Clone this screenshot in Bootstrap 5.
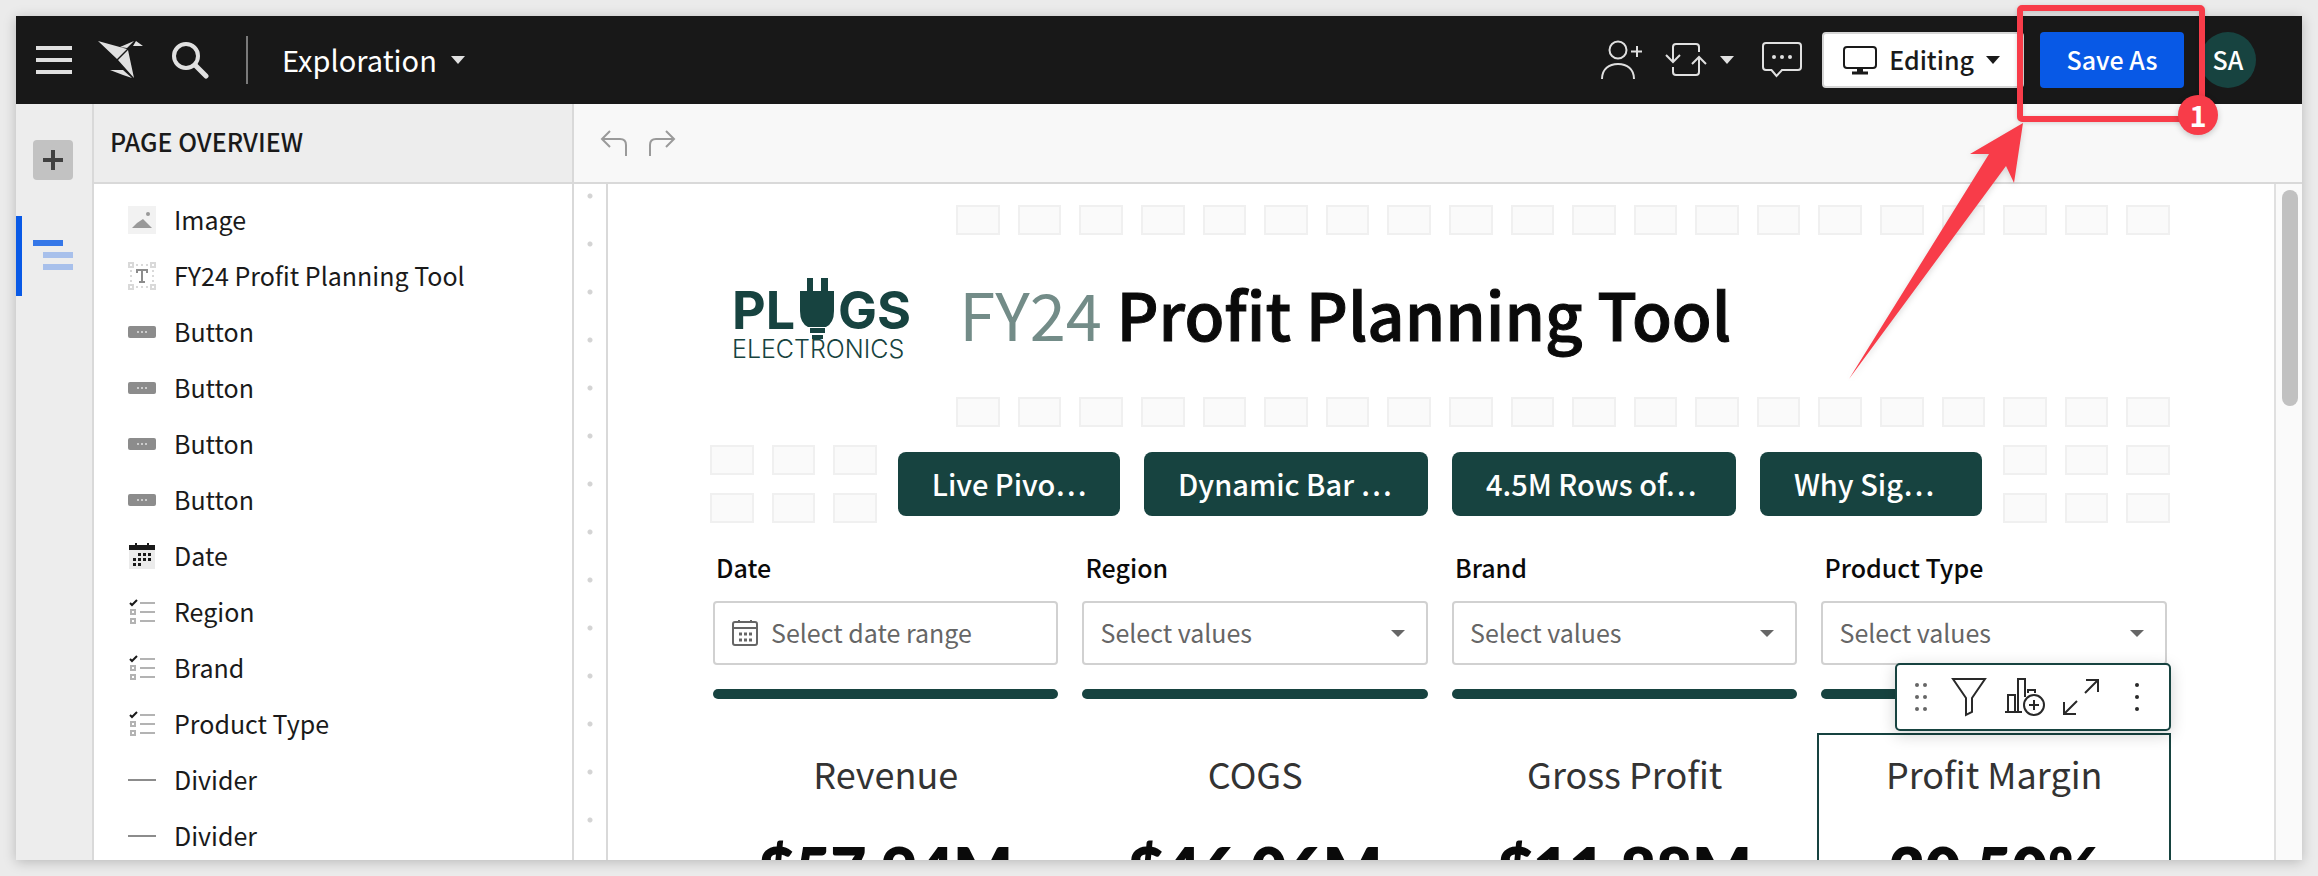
<!DOCTYPE html>
<html lang="en">
<head>
<meta charset="utf-8">
<meta name="viewport" content="width=device-width, initial-scale=1">
<title>FY24 Profit Planning Tool</title>
<link href="https://cdn.jsdelivr.net/npm/bootstrap@5.3.0/dist/css/bootstrap.min.css" rel="stylesheet">
<style>
:root{--pine:#174340;--line:#d9d9d9;--ink:#1a1a1a;--blue:#0859e6;--red:#f83c49}
body{background:#ebebeb;font-family:"Noto Sans CJK SC",sans-serif;font-size:25px;line-height:36px;color:var(--ink)}
button{font:inherit;color:inherit}
svg{display:block;flex:none}
.semi{font-weight:500}
.lift{padding-bottom:3px}
.page-frame{height:100vh;padding:16px}
.app-window{box-shadow:0 2px 12px rgba(0,0,0,.22);background:#fff}
.topbar{height:88px;background:#181818;color:#e0e0e0;padding:0 46px 0 20px;z-index:3}
.plain-btn{background:none;border:0;padding:0}
.search-btn{margin-left:28px}
.bird-link{margin-left:26px}
.refresh-btn{margin-left:22px;gap:13px}
.comment-btn{margin-left:28px}
.split{width:2px;height:48px;background:#7a7a7a;margin:0 34px 0 37px}
.doc-name{font-size:29px;color:#fff;gap:14px}
.mode-btn{height:56px;background:#fff;border:2px solid #d6d6d6;border-radius:4px;color:var(--ink);padding:0 22px 0 19px;gap:12px;margin-left:20px}
.save-wrap{margin-left:16px}
.save-btn{height:56px;width:144px;border:0;border-radius:4px;background:var(--blue);color:#fff}
.avatar{width:56px;height:56px;background:var(--pine);color:#fff;margin-left:16px}
.callout-box{inset:-27px -21px -34px -23px;border:6px solid var(--red);border-radius:5px;pointer-events:none;filter:drop-shadow(0 1px 2px rgba(0,0,0,.15));z-index:2}
.callout-num{width:40px;height:40px;right:-34px;bottom:-47px;background:var(--red);color:#fff;font-size:29px;z-index:3;box-shadow:0 2px 6px rgba(0,0,0,.2)}
.callout-arrow{right:157px;top:90px;z-index:2;pointer-events:none;filter:drop-shadow(0 2px 3px rgba(0,0,0,.15))}
.rail{width:78px;background:#ededed;border-right:2px solid var(--line)}
.add-btn{width:40px;height:40px;border:0;border-radius:4px;background:#c2c2c2;margin:36px 0 0 17px;padding:0}
.rail-tab{margin-top:36px;height:80px;border:0;border-left:6px solid var(--blue);background:none;padding:0 0 2px 11px}
.overview{width:480px;border-right:2px solid var(--line)}
.pane-head{height:80px;border-bottom:2px solid var(--line)}
.overview .pane-head{background:#ededed;padding:0 16px 4px}
.pane-head h2{font-size:25px;line-height:36px}
.edit-bar{background:#f8f8f8;padding:0 26px;gap:20px}
.outline{padding:8px 0 0 34px}
.outline a{height:56px;gap:18px;color:var(--ink);text-decoration:none}
.gutter{width:34px;border-right:2px solid var(--line);background:radial-gradient(circle at 16px 12px,#d4d4d4 2px,transparent 3px) 0 0/34px 48px repeat-y}
.track{width:28px;background:#fafafa;border-left:2px solid #e0e0e0;padding:6px 4px 0 6px}
.thumb{height:216px;background:#c1c1c1;border-radius:8px}
.sheet{padding:21px 104px 0 102px}
.cells{display:grid;grid-template-columns:repeat(24,minmax(0,1fr));grid-auto-rows:30px;gap:18px}
.slot{background:#fafafa;border:2px solid #f0f0f0}
.brand-area{grid-column:1/5;grid-row:1/6;padding:68px 0 0 23px}
.title-area{grid-column:5/25;grid-row:2/5;padding:0 0 6px 3px}
.title-area h1{font-size:65px;line-height:96px;color:#0a0a0a;-webkit-text-stroke:1px #0a0a0a}
.title-area h1 span{font-weight:400;color:#738c88;-webkit-text-stroke:0}
.nav-pill{margin:7px 3px;border:0;border-radius:8px;background:var(--pine);color:#fff;font-size:29px;padding:0 24px 3px 34px;text-align:left;white-space:nowrap}
.field-box{margin:8px 3px 0}
.field-box label{height:52px;padding-left:3px;color:#0a0a0a}
.picker{height:64px;border:2px solid #d1d1d1;border-radius:4px;background:#fff;color:#666;padding:0 21px 0 16px;gap:12px}
.rule-bar{height:10px;border-radius:5px;background:var(--pine);margin:4px 3px 0}
.kpi{border:2px solid transparent;padding-top:12px}
.kpi.active{border-color:var(--pine);margin:0 -1px}
.kpi h3{font-size:36px;line-height:52px;color:#333;font-weight:400}
.kpi strong{font-size:62px;line-height:80px;font-family:Lato,sans-serif;font-weight:800;color:#0a0a0a;margin-top:30px}
.kpi-tools{right:-2px;bottom:100%;margin-bottom:4px;width:276px;height:68px;border:2px solid var(--pine);border-radius:5px;background:#fff;box-shadow:0 4px 16px rgba(0,0,0,.18);padding:0 4px;color:#292929}
.kpi-tools button{width:56px;height:64px}
.kpi-tools .grip{width:40px}
</style>
</head>
<body>
<div class="page-frame">
<div class="app-window d-flex flex-column h-100">
  <header class="topbar d-flex align-items-center position-relative flex-shrink-0">
    <button class="plain-btn" aria-label="Menu"><svg width="36" height="28" fill="currentColor"><path d="M0 0h36v4H0zM0 12h36v4H0zM0 24h36v4H0z"/></svg></button>
    <a class="bird-link" href="#" aria-label="Home"><svg width="46" height="40" viewBox="0 0 46 40" fill="#e0e0e0"><path d="M0 1 29 9 19 19zM22 7 36 1 29 8zM38 1 45 6H35zM30 10 36 38 20 20zM12 30H25L34 38 25 35z"/></svg></a>
    <button class="plain-btn search-btn" aria-label="Search"><svg width="37" height="37" viewBox="0 0 37 37" fill="none" stroke="#e0e0e0" stroke-width="4" stroke-linecap="round"><circle cx="14" cy="14" r="12"/><path d="M23 23 34 34" stroke-width="5"/></svg></button>
    <div class="split"></div>
    <button class="plain-btn doc-name d-flex align-items-center"><span class="lift">Exploration</span><svg width="14" height="8" fill="#e0e0e0"><path d="M0 0H14L7 8z"/></svg></button>
    <button class="plain-btn ms-auto" aria-label="Share"><svg width="42" height="40" viewBox="0 0 42 40" fill="none" stroke="#e0e0e0" stroke-width="2"><circle cx="17" cy="10" r="8.500"/><path d="M1 39C1 29 8 24 17 24S33 29 33 39M36 6V17M30 11.500H41"/></svg></button>
    <button class="plain-btn refresh-btn d-flex align-items-center" aria-label="Refresh"><svg width="42" height="36" viewBox="0 0 42 36" fill="none" stroke="#e0e0e0" stroke-width="2"><path d="M34 10V5Q34 2 31 2H11Q8 2 8 5V20M1 13 8 20 15 13M8 25V30Q8 33 11 33H31Q34 33 34 30V15M27 22 34 15 41 22"/></svg><svg width="14" height="8" fill="#e0e0e0"><path d="M0 0H14L7 8z"/></svg></button>
    <button class="plain-btn comment-btn" aria-label="Comments"><svg width="40" height="36" viewBox="0 0 40 36" fill="none" stroke="#e0e0e0" stroke-width="2"><path d="M4 1H36Q39 1 39 4V25Q39 28 36 28H20L14.500 34 9.500 28H4Q1 28 1 25V4Q1 1 4 1z"/><g fill="#e0e0e0" stroke="none"><circle cx="12" cy="15" r="2"/><circle cx="20" cy="15" r="2"/><circle cx="28" cy="15" r="2"/></g></svg></button>
    <button class="mode-btn d-flex align-items-center"><svg width="34" height="29" viewBox="0 0 34 29" fill="none" stroke="#1a1a1a" stroke-width="2"><rect x="1" y="1" width="32" height="21" rx="3"/><path d="M14 24H20M9 27H25" stroke-width="3"/></svg><span class="semi lift">Editing</span><svg width="14" height="8" fill="#1a1a1a"><path d="M0 0H14L7 8z"/></svg></button>
    <div class="save-wrap position-relative">
      <button class="save-btn semi lift">Save As</button>
      <div class="callout-box position-absolute"></div>
      <svg class="callout-arrow position-absolute" width="180" height="264" viewBox="0 0 180 264" fill="#f83c49"><path d="M176 1 123 32H142L2 257 159 44 167 61z"/></svg>
      <b class="callout-num lift position-absolute rounded-circle d-flex align-items-center justify-content-center">1</b>
    </div>
    <div class="avatar semi lift rounded-circle d-flex align-items-center justify-content-center">SA</div>
  </header>
  <div class="d-flex flex-grow-1 overflow-hidden">
    <nav class="rail d-flex flex-column flex-shrink-0">
      <button class="add-btn" aria-label="Add"><svg width="40" height="40" fill="#404040"><path d="M10 18H30V22H10zM18 10H22V30H18z"/></svg></button>
      <button class="rail-tab d-flex align-items-center" aria-label="Page overview"><svg width="40" height="30"><path fill="#3577e8" d="M0 0H30V6H0z"/><path fill="#a8c0eb" d="M10 12H40V18H10zM10 24H40V30H10z"/></svg></button>
    </nav>
    <aside class="overview flex-shrink-0">
      <div class="pane-head d-flex align-items-center"><h2 class="m-0 semi">PAGE OVERVIEW</h2></div>
      <nav class="outline" id="outline"></nav>
    </aside>
    <main class="flex-grow-1 d-flex flex-column">
      <div class="pane-head edit-bar d-flex align-items-center flex-shrink-0">
        <button class="plain-btn" aria-label="Undo"><svg width="28" height="28" fill="none" stroke="#9a9a9a" stroke-width="2"><path d="M10 2 2 10 10 18M2 10H20Q26 10 26 16V27"/></svg></button>
        <button class="plain-btn" aria-label="Redo"><svg width="28" height="28" fill="none" stroke="#9a9a9a" stroke-width="2"><path d="M18 2 26 10 18 18M26 10H8Q2 10 2 16V27"/></svg></button>
      </div>
      <div class="d-flex flex-grow-1 overflow-hidden">
        <div class="gutter flex-shrink-0"></div>
        <div class="sheet flex-grow-1">
          <div class="cells" id="cells">
            <div class="brand-area">
              <svg width="180" height="86" viewBox="0 0 180 86" fill="#174340" font-family="Inter,sans-serif"><text x="-1" y="56" font-size="52" font-weight="700">PL</text><text x="105" y="56" font-size="52" font-weight="700">GS</text><path d="M74 5H80V18H88V5H95V18H101V38Q101 50 93 54H75Q67 50 67 38V18H74zM77 55H92V60H77zM79 62H90V66H79z"/><text x="-1" y="85" font-size="25" font-weight="300">ELECTRONICS</text></svg>
            </div>
            <div class="title-area d-flex align-items-center"><h1 class="m-0 semi"><span>FY24</span> Profit Planning Tool</h1></div>
          </div>
        </div>
        <div class="track flex-shrink-0"><div class="thumb"></div></div>
      </div>
    </main>
  </div>
</div>
</div>
<script>
const icons={
 image:'<svg width="28" height="28"><path fill="#f2f2f2" d="M0 0H28V28H0z"/><path fill="#999" d="M4 22 9 17 15 13 24 22z"/><circle cx="20" cy="8" r="2" fill="#999"/></svg>',
 text:'<svg width="28" height="28" fill="none" stroke="#d9d9d9" stroke-width="2"><path d="M1 1H5V5H1zM23 1H27V5H23zM1 23H5V27H1zM23 23H27V27H23z"/><path stroke-dasharray="2 3" d="M8 3H21M8 25H21M3 8V21M25 8V21"/><path fill="#8c8c8c" stroke="none" d="M8 7H20V11H18V9H15V19H17V21H11V19H13V9H10V11H8z"/></svg>',
 button:'<svg width="28" height="12"><rect width="28" height="12" rx="2" fill="#8c8c8c"/><path fill="#ccc" d="M9 5h2v2H9zM13 5h2v2h-2zM17 5h2v2h-2z"/></svg>',
 date:'<svg width="28" height="28"><path fill="#ebebeb" d="M1 4H27V27H1z"/><path fill="#1a1a1a" d="M1 3H7V1H9V3H19V1H21V3H27V8H1zM10 11h3v3h-3zM15 11h3v3h-3zM20 11h3v3h-3zM5 16h3v3H5zM10 16h3v3h-3zM15 16h3v3h-3zM20 16h3v3h-3zM5 21h3v3H5zM10 21h3v3h-3z"/></svg>',
 list:'<svg width="28" height="28" fill="none" stroke="#b3b3b3" stroke-width="2"><path d="M12 5H27M12 14H27M12 23H27M3 12H7V16H3zM3 21H7V25H3z"/><path stroke="#1a1a1a" d="M2 5 4 7 9 2"/></svg>',
 divider:'<svg width="28" height="2"><path fill="#8c8c8c" d="M0 0H28V2H0z"/></svg>'};
document.getElementById('outline').innerHTML=[['image','Image'],['text','FY24 Profit Planning Tool'],['button','Button'],['button','Button'],['button','Button'],['button','Button'],['date','Date'],['list','Region'],['list','Brand'],['list','Product Type'],['divider','Divider'],['divider','Divider']]
 .map(([i,t])=>`<a href="#" class="d-flex align-items-center">${icons[i]}<span class="lift">${t}</span></a>`).join('');
const slot=(c,r)=>`<div class="slot" style="grid-area:${r}/${c}"></div>`;
let out='';
for(const r of [1,5])for(let c=5;c<=24;c++)out+=slot(c,r);
for(const r of [6,7])for(const c of [1,2,3,22,23,24])out+=slot(c,r);
[['Live Pivo…','4/8'],['Dynamic Bar …','8/13'],['4.5M Rows of…','13/18'],['Why Sig…','18/22']]
 .forEach(([t,c])=>out+=`<button class="nav-pill semi" style="grid-column:${c};grid-row:6/8">${t}</button>`);
const cal='<svg width="28" height="28" fill="none" stroke="#666" stroke-width="2"><rect x="2" y="3" width="24" height="23" rx="2"/><path d="M2 9H26M8 1V3M20 1V3"/><path stroke-width="3" stroke-dasharray="3 2" d="M8 15H21M8 21H21"/></svg>';
const caret='<svg class="ms-auto" width="14" height="7" fill="#666"><path d="M0 0H14L7 7z"/></svg>';
['Date','Region','Brand','Product Type'].forEach((t,i)=>out+=`<div class="field-box" style="grid-column:${i*6+1}/span 6;grid-row:8/11"><label class="d-block semi" for="f${i}">${t}</label><button id="f${i}" class="picker w-100 d-flex align-items-center">${i?'<span class="lift">Select values</span>'+caret:cal+'<span class="lift">Select date range</span>'}</button></div>`);
for(let i=0;i<4;i++)out+=`<div class="rule-bar" style="grid-column:${i*6+1}/span 6;grid-row:11"></div>`;
const tool=(name,svg,cls='')=>`<button class="plain-btn d-flex align-items-center justify-content-center ${cls}" aria-label="${name}">${svg}</button>`;
const tools='<div class="kpi-tools position-absolute d-flex align-items-center">'
+tool('Move','<svg width="14" height="30" fill="#666"><circle cx="3" cy="3" r="2"/><circle cx="11" cy="3" r="2"/><circle cx="3" cy="15" r="2"/><circle cx="11" cy="15" r="2"/><circle cx="3" cy="27" r="2"/><circle cx="11" cy="27" r="2"/></svg>','grip')
+tool('Filter','<svg width="36" height="40" fill="none" stroke="currentColor" stroke-width="2"><path d="M2 2H34L21 21V35L15 38V21z"/></svg>')
+tool('Add chart','<svg width="40" height="40" fill="none" stroke="currentColor" stroke-width="2"><path d="M0 35H17M3 35V18H10V35M13 35V2H20V20M23 16V13H30V16"/><circle cx="29" cy="28" r="10"/><path d="M24 28H34M29 23V33"/></svg>')
+tool('Expand','<svg width="38" height="38" fill="none" stroke="currentColor" stroke-width="2"><path d="M24 2H36V14M36 2 23 15M14 36H2V24M2 36 15 23"/></svg>')
+tool('More','<svg width="6" height="30" fill="currentColor"><circle cx="3" cy="3" r="2"/><circle cx="3" cy="15" r="2"/><circle cx="3" cy="27" r="2"/></svg>')+'</div>';
[['Revenue','$57.94M'],['COGS','$46.06M'],['Gross Profit','$11.88M'],['Profit Margin','20.50%']]
 .forEach(([t,v],i)=>out+=`<section class="kpi position-relative text-center${i==3?' active':''}" style="grid-column:${i*6+1}/span 6;grid-row:12/16"><h3 class="m-0">${t}</h3><strong class="d-block">${v}</strong>${i==3?tools:''}</section>`);
document.getElementById('cells').insertAdjacentHTML('beforeend',out);
</script>
<script src="https://cdn.jsdelivr.net/npm/bootstrap@5.3.0/dist/js/bootstrap.bundle.min.js"></script>
</body>
</html>
